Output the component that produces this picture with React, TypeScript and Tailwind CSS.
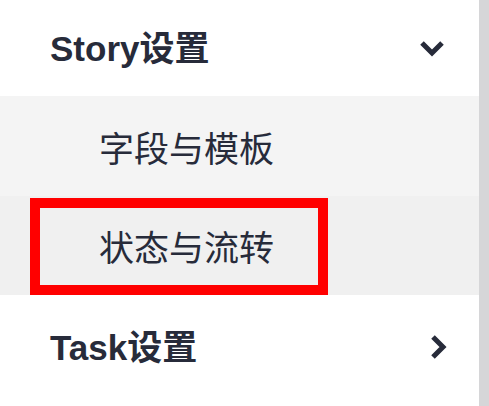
import * as React from "react"

const font = "font-['Liberation_Sans','Noto_Sans_CJK_SC',sans-serif]"

function ChevronDown() {
  return (
    <svg width="28" height="19" viewBox="0 0 28 19" fill="none">
      <polyline points="4,4 14,14 24,4" stroke="#272b3a" strokeWidth="5" strokeLinejoin="miter" />
    </svg>
  )
}

function ChevronRight() {
  return (
    <svg width="19" height="28" viewBox="0 0 19 28" fill="none">
      <polyline points="4,4 14,14 4,24" stroke="#272b3a" strokeWidth="5" strokeLinejoin="miter" />
    </svg>
  )
}

export default function App() {
  return (
    <div className={`flex w-[489px] h-[406px] overflow-hidden bg-white text-[#272b3a] ${font}`}>
      <div className="flex-1 flex flex-col">
        {/* Story 设置 */}
        <div className="h-[96px] flex items-center justify-between pl-[50px] pr-[33px]">
          <span className="text-[35px] font-bold leading-none">Story设置</span>
          <ChevronDown />
        </div>
        <div className="flex flex-col">
          <div className="h-[100px] bg-[#f4f4f4] flex items-center pl-[99px]">
            <span className="text-[35px] leading-none font-['Noto_Sans_CJK_SC',sans-serif]">字段与模板</span>
          </div>
          <div className="relative h-[99px] bg-[#f0f0f0] flex items-center pl-[99px]">
            <span className="text-[35px] leading-none font-['Noto_Sans_CJK_SC',sans-serif]">状态与流转</span>
            <div className="absolute left-[30px] top-[2px] w-[298px] h-[97px] border-[10px] border-[#ff0000]" />
          </div>
        </div>
        {/* Task 设置 */}
        <div className="h-[104px] flex items-center justify-between pl-[50px] pr-[31px]">
          <span className="text-[35px] font-bold leading-none">Task设置</span>
          <ChevronRight />
        </div>
      </div>
      <div className="w-[10px] bg-[#d6d6d8]" />
    </div>
  )
}
